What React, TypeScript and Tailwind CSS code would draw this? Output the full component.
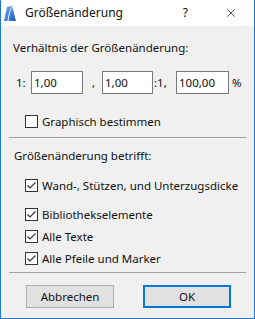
import { X } from 'lucide-react';

type CheckProps = { label: string; checked?: boolean; className?: string };

function CheckRow({ label, checked, className }: CheckProps) {
  return (
    <div className={`flex h-[17px] items-center pl-[16px] ${className ?? ''}`}>
      <div className="flex h-[13px] w-[13px] shrink-0 items-center justify-center border border-[#333] bg-white">
        {checked && (
          <svg width="11" height="11" viewBox="0 0 11 11">
            <path d="M1.5 5.5 L4 8 L9.5 2.5" fill="none" stroke="#333" strokeWidth="1.2" />
          </svg>
        )}
      </div>
      <span className="ml-[4px] whitespace-nowrap">{label}</span>
    </div>
  );
}

function Field({ value, width }: { value: string; width: string }) {
  return (
    <div className={`flex h-[23px] items-center border border-[#7a7a7a] bg-white pl-[2px] ${width}`}>
      {value}
    </div>
  );
}

function AppLogo() {
  return (
    <svg width="12" height="15" viewBox="0 0 12 15">
      <defs>
        <linearGradient id="lg" x1="0" y1="0" x2="1" y2="1">
          <stop offset="0" stopColor="#6aa8f0" />
          <stop offset="1" stopColor="#1f5fc4" />
        </linearGradient>
      </defs>
      <path d="M0 15 L3 1 L8 0 L12 15 Z" fill="url(#lg)" />
      <path d="M4 15 C5 8 6 4 8 1" fill="none" stroke="#fff" strokeWidth="1" />
    </svg>
  );
}

export default function App() {
  return (
    <div
      className="flex h-[319px] w-[255px] flex-col border-x border-b border-[#1c79d4] bg-[#f0f0f0] text-[11.5px] leading-[16px] text-[#111]"
      style={{ fontFamily: '"Noto Sans", "Open Sans", sans-serif' }}
    >
      {/* title bar */}
      <div className="flex h-[26px] shrink-0 items-center bg-white">
        <div className="ml-[3px] flex w-[12px] items-center">
          <AppLogo />
        </div>
        <span className="ml-[9px] text-[12px]">Größenänderung</span>
        <span className="ml-auto text-[12px]">?</span>
        <X className="ml-[36px] mr-[16px] h-[14px] w-[14px] text-[#111]" strokeWidth={1.2} />
      </div>

      <div className="px-[8px]">
        <div className="mt-[14px] pl-[4px]">Verhältnis der Größenänderung:</div>

        <div className="mt-[15px] flex items-center">
          <span className="ml-[7px] w-[15px]">1:</span>
          <Field value="1,00" width="w-[52px]" />
          <span className="ml-[9px] w-[10px]">,</span>
          <Field value="1,00" width="w-[51px]" />
          <span className="w-[23px] pl-[1px]">:1,</span>
          <Field value="100,00" width="w-[53px]" />
          <span className="ml-[3px]">%</span>
        </div>

        <CheckRow label="Graphisch bestimmen" className="mt-[19px]" />

        <div className="mt-[7px] h-px bg-[#a0a0a0]" />

        <div className="mt-[10px] pl-[5px]">Größenänderung betrifft:</div>

        <CheckRow label="Wand-, Stützen, und Unterzugsdicke" checked className="mt-[13px]" />
        <CheckRow label="Bibliothekselemente" checked className="mt-[12px]" />
        <CheckRow label="Alle Texte" checked className="mt-[5px]" />
        <CheckRow label="Alle Pfeile und Marker" checked className="mt-[5px]" />

        <div className="mt-[5px] h-px bg-[#a0a0a0]" />

        <div className="mt-[12px] flex pl-[17px]">
          <button className="flex h-[23px] w-[88px] items-center justify-center border border-[#adadad] bg-[#e1e1e1]">
            Abbrechen
          </button>
          <button className="ml-[29px] flex h-[23px] w-[88px] items-center justify-center border-2 border-[#0078d7] bg-[#e1e1e1]">
            OK
          </button>
        </div>
      </div>
    </div>
  );
}
